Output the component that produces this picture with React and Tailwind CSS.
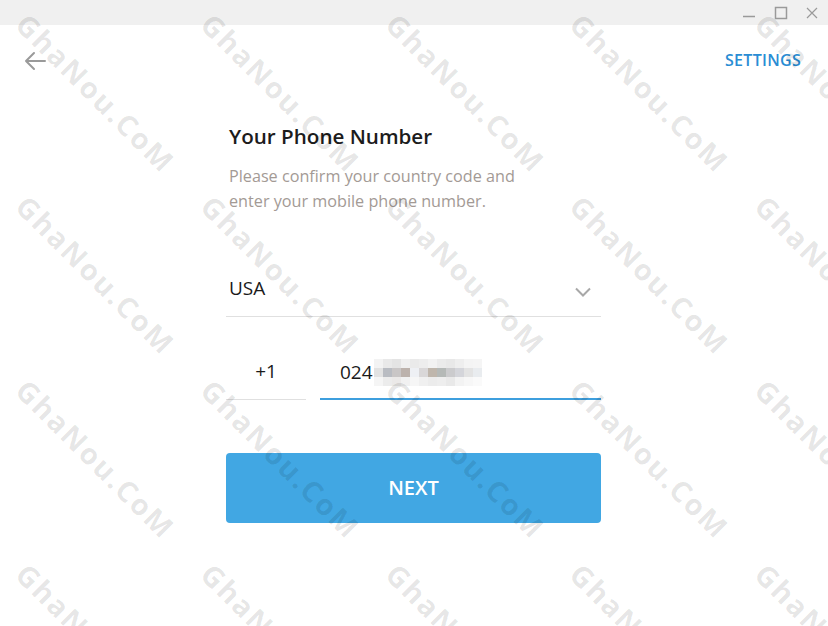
import React from "react";

const MARK_COLS = [21, 206, 391, 575, 760];
const MARK_ROWS = [15, 197, 381, 565];

// pixelated blur over the hidden digits: rows of grey shades
const BLUR = [
  ["#f3f3f3", "#e9e9e9", "#e4e4e4", "#efefef", "#eaeaea", "#ededed", "#f2f2f2", "#ebebeb", "#e8e8e8", "#eeeeee", "#f4f4f4", "#f5f5f5"],
  ["#e2e2e2", "#b9bcc2", "#c9c6c6", "#bcb2ac", "#eef0f4", "#d9d7d8", "#bfb6ac", "#b5b9b7", "#cbcbcd", "#d4d5da", "#e3e3e3", "#e9ecef"],
  ["#f5f5f5", "#ececec", "#ebe9e8", "#f1f1f1", "#f6f6f6", "#f0f0f0", "#ececec", "#eeeeee", "#e9e9e9", "#f3f3f3", "#f7f7f7", "#fafafa"],
];

function Watermarks() {
  return (
    <div className="absolute inset-0 pointer-events-none overflow-hidden">
      {MARK_ROWS.map((y) =>
        MARK_COLS.map((x) => (
          <div
            key={`${x}-${y}`}
            className="absolute origin-top-left rotate-45 whitespace-nowrap text-[29px] font-bold leading-none tracking-[2px] text-black/10"
            style={{ left: x + 11, top: y - 7 }}
          >
            GhaNou.CoM
          </div>
        ))
      )}
    </div>
  );
}

export default function App() {
  return (
    <div className="relative w-[828px] h-[626px] overflow-hidden bg-white font-['Open_Sans',sans-serif]">
      {/* window title bar */}
      <div className="h-[25px] bg-[#f0f0f0] flex items-center justify-end pr-[10px] gap-[18px] text-[#9a9a9a]">
        <svg width="14" height="14" viewBox="0 0 14 14" fill="none" stroke="currentColor" strokeWidth="1.5">
          <path d="M1 10.5h12" />
        </svg>
        <svg width="14" height="14" viewBox="0 0 14 14" fill="none" stroke="currentColor" strokeWidth="1.5">
          <rect x="1.5" y="1.5" width="11" height="11" />
        </svg>
        <svg width="12" height="12" viewBox="0 0 12 12" fill="none" stroke="currentColor" strokeWidth="1.2">
          <path d="M1 1l10 10M11 1L1 11" />
        </svg>
      </div>

      {/* top nav */}
      <div className="flex items-start justify-between pl-[24px] pr-[27px] mt-[23px]">
        <svg width="22" height="22" viewBox="0 0 22 22" fill="none" stroke="#9a9a9a" strokeWidth="2" strokeLinecap="round" strokeLinejoin="round" className="mt-[2px]">
          <path d="M21 11H2M10 3l-8 8 8 8" />
        </svg>
        <button className="text-[16px] leading-[24px] font-semibold text-[#2a8dd4] tracking-[0.3px]">SETTINGS</button>
      </div>

      {/* form */}
      <div className="ml-[226px] w-[375px] mt-[50px]">
        <h1 className="pl-[3px] text-[20.6px] font-semibold text-[#1c1c1c] leading-[28px]">Your Phone Number</h1>
        <p className="pl-[3px] mt-[14px] text-[16.2px] leading-[25px] text-[#a39a95]">
          Please confirm your country code and
          <br />
          enter your mobile phone number.
        </p>

        <div className="mt-[49px] flex items-center justify-between border-b border-[#e0e0e0] pl-[3px] pr-[10px] h-[54px] pb-[2px]">
          <span className="text-[19px] text-[#1a1a1a]">USA</span>
          <svg width="16" height="10" viewBox="0 0 16 10" fill="none" stroke="#a8a8a8" strokeWidth="2" className="mt-[6px]">
            <path d="M1 1.5l7 7 7-7" />
          </svg>
        </div>

        <div className="mt-[29px] flex items-end gap-[14px]">
          <div className="w-[80px] h-[54px] flex items-center justify-center border-b border-[#e0e0e0] text-[19px] text-[#1a1a1a] pb-[2px]">
            +1
          </div>
          <div className="flex-1 h-[54px] flex items-center border-b-2 border-[#3e9fde] pl-[20px] text-[19px] text-[#1a1a1a]">
            <span>024</span>
            <div className="ml-[1px] flex flex-col">
              {BLUR.map((row, i) => (
                <div key={i} className="flex">
                  {row.map((c, j) => (
                    <div key={j} className="w-[9px] h-[9px]" style={{ background: c }} />
                  ))}
                </div>
              ))}
            </div>
          </div>
        </div>

        <button className="mt-[53px] w-full h-[70px] rounded-[4px] bg-[#41a7e3] text-white text-[20px] font-semibold">
          NEXT
        </button>
      </div>

      <Watermarks />
    </div>
  );
}
